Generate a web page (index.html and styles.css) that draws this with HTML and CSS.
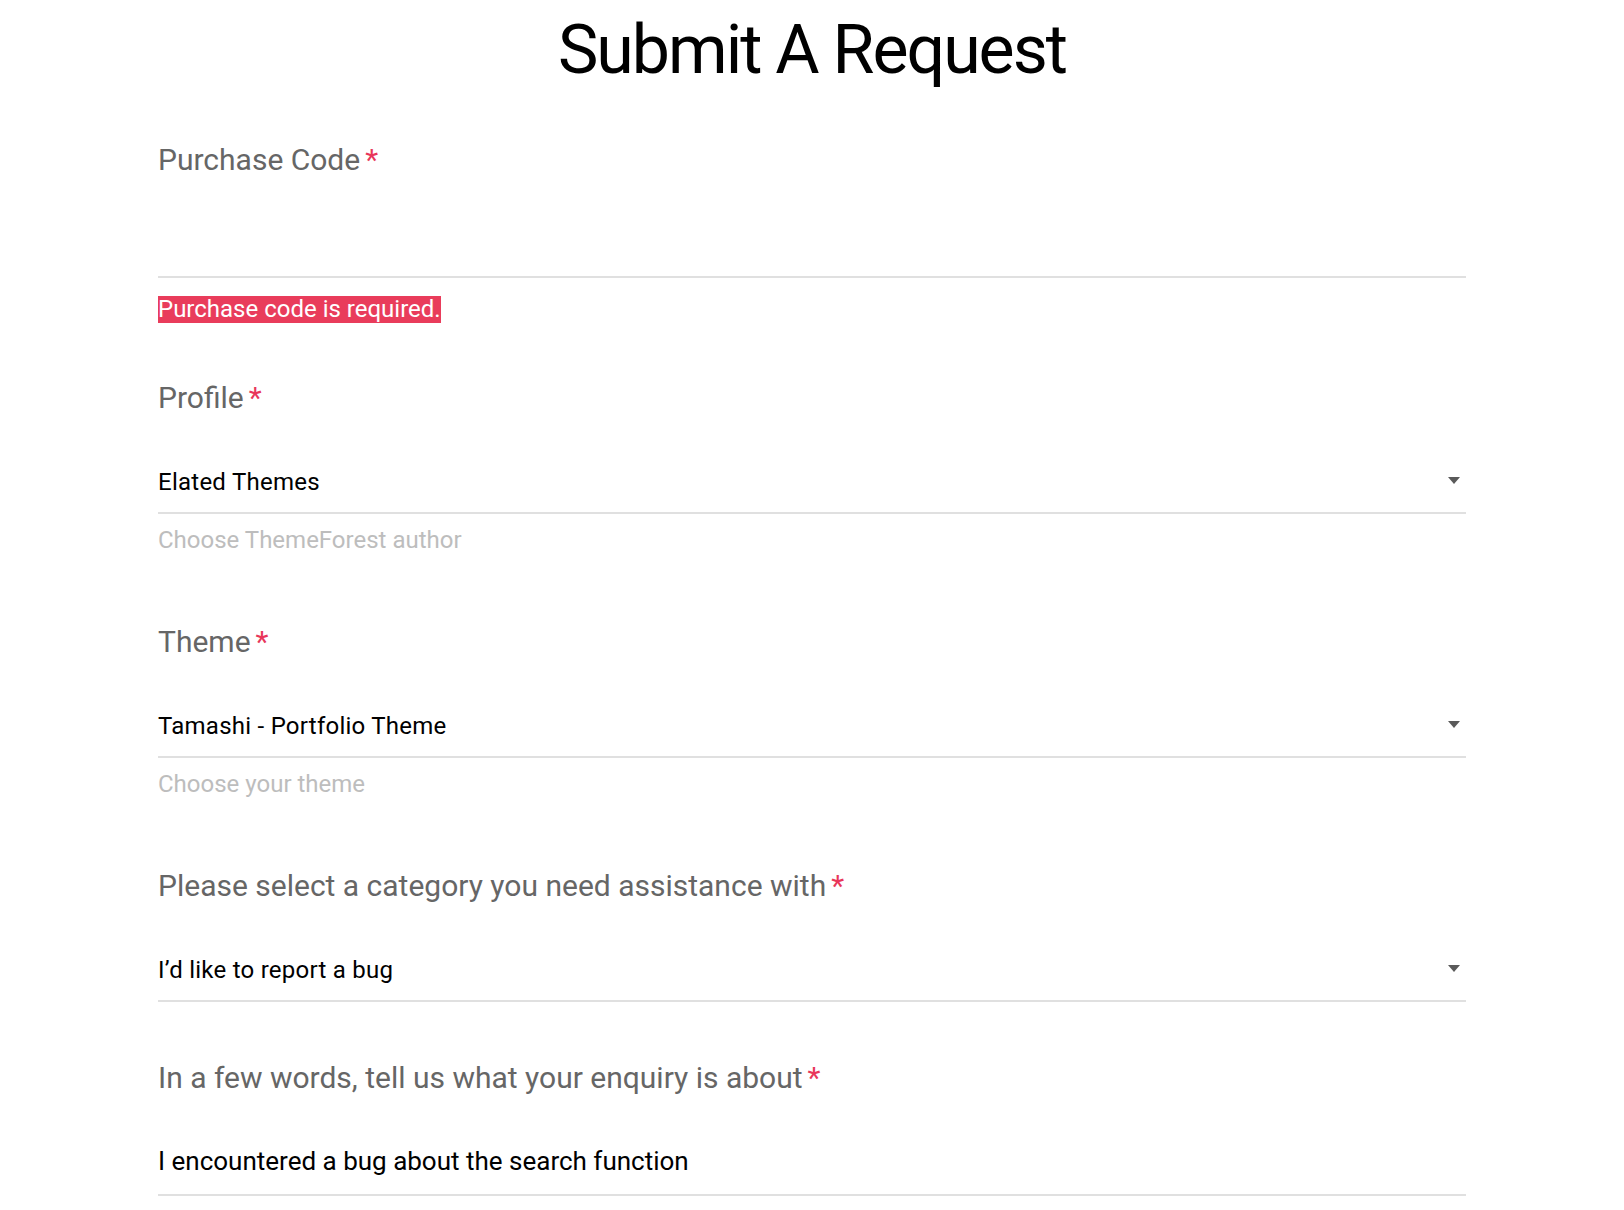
FILE: index.html
```html
<!DOCTYPE html>
<html lang="en">
<head>
<meta charset="utf-8">
<title>Submit A Request</title>
<link rel="stylesheet" href="styles.css">
</head>
<body>
<main class="page">
  <h1 class="title">Submit A Request</h1>
  <form class="form">
    <div class="field field-error">
      <label class="label">Purchase Code<span class="req">*</span></label>
      <div class="control text"><span class="value"></span></div>
      <div class="error-row"><span class="error">Purchase code is required.</span></div>
    </div>
    <div class="field">
      <label class="label">Profile<span class="req">*</span></label>
      <div class="control select"><span class="value">Elated Themes</span><span class="arrow"></span></div>
      <div class="helper">Choose ThemeForest author</div>
    </div>
    <div class="field">
      <label class="label">Theme<span class="req">*</span></label>
      <div class="control select"><span class="value">Tamashi - Portfolio Theme</span><span class="arrow"></span></div>
      <div class="helper">Choose your theme</div>
    </div>
    <div class="field">
      <label class="label">Please select a category you need assistance with<span class="req">*</span></label>
      <div class="control select"><span class="value">I’d like to report a bug</span><span class="arrow"></span></div>
    </div>
    <div class="field last">
      <label class="label">In a few words, tell us what your enquiry is about<span class="req">*</span></label>
      <div class="control text"><span class="value">I encountered a bug about the search function</span></div>
    </div>
  </form>
</main>
</body>
</html>
```
FILE: styles.css
```css
html, body {
  margin: 0;
  padding: 0;
  background: #ffffff;
  overflow: hidden;
}
body {
  font-family: Roboto, "Liberation Sans", Arial, sans-serif;
  color: #000;
}
.page {
  width: 1308px;
  margin: 0 auto;
  padding-top: 10px;
}
.title {
  margin: 0;
  font-size: 68px;
  line-height: 80px;
  font-weight: 400;
  letter-spacing: -2px;
  text-align: center;
  color: #000;
}
.form {
  margin-top: 52px;
  display: flex;
  flex-direction: column;
}
.field {
  display: flex;
  flex-direction: column;
  margin-bottom: 58px;
}
.field.field-error {
  margin-bottom: 57px;
}
.field.last {
  margin-bottom: 0;
}
.label {
  display: block;
  font-size: 30px;
  line-height: 36px;
  color: #666666;
}
.req {
  color: #e8365a;
  margin-left: 5px;
}
.control {
  display: flex;
  align-items: center;
  justify-content: space-between;
  border-bottom: 2px solid #e0e0e0;
}
.control.select {
  height: 28px;
  padding: 52px 0 16px;
}
.control.select .value {
  font-size: 24px;
  line-height: 28px;
  letter-spacing: 0.25px;
}
.control.text {
  height: 30px;
  padding: 50px 0 18px;
}
.control.text .value {
  font-size: 26px;
  line-height: 30px;
}
.value {
  color: #000;
}
.arrow {
  width: 0;
  height: 0;
  border-left: 6px solid transparent;
  border-right: 6px solid transparent;
  border-top: 7px solid #5a5a5a;
  margin-right: 6px;
  margin-bottom: 3px;
}
.error-row {
  margin-top: 18px;
  height: 27px;
  line-height: 27px;
}
.error {
  display: inline-block;
  vertical-align: top;
  background: #e93c5b;
  color: #ffffff;
  font-size: 24px;
  line-height: 27px;
}
.helper {
  margin: 12px 0;
  font-size: 24px;
  line-height: 28px;
  color: #bdbdbd;
}
```
